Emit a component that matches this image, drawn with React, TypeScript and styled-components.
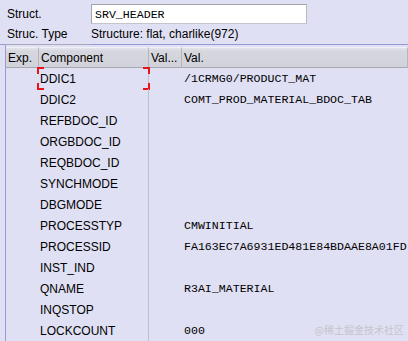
import { Fragment } from 'react';
import styled, { createGlobalStyle } from 'styled-components';

const GlobalStyle = createGlobalStyle`
  html, body {
    margin: 0;
    padding: 0;
    background: #e0e0f4;
  }
  body {
    font-family: "Liberation Sans", Arial, sans-serif;
    font-size: 12px;
    color: #000;
  }
`;

const Screen = styled.div`
  position: relative;
  width: 408px;
  height: 341px;
  overflow: hidden;
  background: #e0e0f4;
`;

const FieldRow = styled.div`
  display: flex;
  align-items: center;
  height: 21px;
  padding-top: 3px;
`;

const Label = styled.div`
  width: 84px;
  padding-left: 7px;
  white-space: nowrap;
`;

const TextInput = styled.div`
  box-sizing: border-box;
  width: 216px;
  height: 20px;
  background: #fff;
  border: 1px solid #a4a4ac;
  border-right-color: #b8b8c0;
  border-bottom-color: #c4c4cc;
  padding: 2px 0 0 3px;
  font-family: "Liberation Mono", "Courier New", monospace;
  font-size: 11.6px;
  line-height: 15px;
`;

const TypeRow = styled.div`
  display: flex;
  align-items: center;
  height: 20px;
  border-bottom: 1px solid #9898d4;
`;

const TypeLabel = styled.div`
  width: 86px;
  margin-left: 5px;
  padding-left: 2px;
  height: 100%;
  display: flex;
  align-items: center;
  box-sizing: border-box;
  border-bottom: 1px solid #a8a8b8;
  margin-bottom: -1px;
`;

const TypeValue = styled.div`
  white-space: nowrap;
`;

const Table = styled.div`
  margin-left: 5px;
  padding-top: 2px;
  border-left: 1px solid #9a9ad2;
  height: 300px;
`;

const Grid = styled.div`
  display: grid;
  grid-template-columns: 33px 110px 33px 1fr;
`;

const HeadCell = styled.div`
  box-sizing: border-box;
  height: 21px;
  display: flex;
  align-items: center;
  padding-left: 2px;
  white-space: nowrap;
  overflow: hidden;
  background: linear-gradient(#e4e4ec 0, #d6d6de 3px, #d2d2da 100%);
  border-right: 1px solid #b4b4bc;
  border-bottom: 1px solid #a8a8b0;
  border-top: 1px solid #f0f0f6;
  &:last-child {
    border-right: none;
  }
`;

const Cell = styled.div<{ $mono?: boolean; $line?: boolean }>`
  position: relative;
  box-sizing: border-box;
  height: 21px;
  display: flex;
  align-items: center;
  padding-left: ${(p) => (p.$mono ? 2 : 1)}px;
  white-space: nowrap;
  font-family: ${(p) =>
    p.$mono ? '"Liberation Mono", "Courier New", monospace' : '"Liberation Sans", Arial, sans-serif'};
  font-size: ${(p) => (p.$mono ? '11.6px' : '12px')};
  border-right: ${(p) => (p.$line ? '1px solid #c0c0cc' : 'none')};
`;

const Corner = styled.span<{ $v: 'top' | 'bottom'; $h: 'left' | 'right' }>`
  position: absolute;
  width: 5px;
  height: 5px;
  ${(p) => p.$v}: -1px;
  ${(p) => p.$h}: -2px;
  border-${(p) => p.$v}: 2px solid #e8141c;
  border-${(p) => p.$h}: 2px solid #e8141c;
`;

const Watermark = styled.div`
  position: absolute;
  right: 4px;
  bottom: 4px;
  font-family: "Noto Sans CJK SC", sans-serif;
  font-size: 10px;
  color: #c4c4cc;
`;

const rows: [string, string][] = [
  ['DDIC1', '/1CRMG0/PRODUCT_MAT'],
  ['DDIC2', 'COMT_PROD_MATERIAL_BDOC_TAB'],
  ['REFBDOC_ID', ''],
  ['ORGBDOC_ID', ''],
  ['REQBDOC_ID', ''],
  ['SYNCHMODE', ''],
  ['DBGMODE', ''],
  ['PROCESSTYP', 'CMWINITIAL'],
  ['PROCESSID', 'FA163EC7A6931ED481E84BDAAE8A01FD'],
  ['INST_IND', ''],
  ['QNAME', 'R3AI_MATERIAL'],
  ['INQSTOP', ''],
  ['LOCKCOUNT', '000'],
];

const App = () => (
  <Screen>
    <GlobalStyle />
    <FieldRow>
      <Label>Struct.</Label>
      <TextInput>SRV_HEADER</TextInput>
    </FieldRow>
    <TypeRow>
      <TypeLabel>Struc. Type</TypeLabel>
      <TypeValue>Structure: flat, charlike(972)</TypeValue>
    </TypeRow>
    <Table>
      <Grid>
        <HeadCell>Exp.</HeadCell>
        <HeadCell>Component</HeadCell>
        <HeadCell>Val...</HeadCell>
        <HeadCell>Val.</HeadCell>
        {rows.map(([name, value], i) => (
          <Fragment key={name}>
            <Cell />
            <Cell $line>
              {name}
              {i === 0 && (
                <>
                  <Corner $v="top" $h="left" />
                  <Corner $v="top" $h="right" />
                  <Corner $v="bottom" $h="left" />
                  <Corner $v="bottom" $h="right" />
                </>
              )}
            </Cell>
            <Cell />
            <Cell $mono>{value}</Cell>
          </Fragment>
        ))}
      </Grid>
    </Table>
    <Watermark>@稀土掘金技术社区</Watermark>
  </Screen>
);

export default App;
